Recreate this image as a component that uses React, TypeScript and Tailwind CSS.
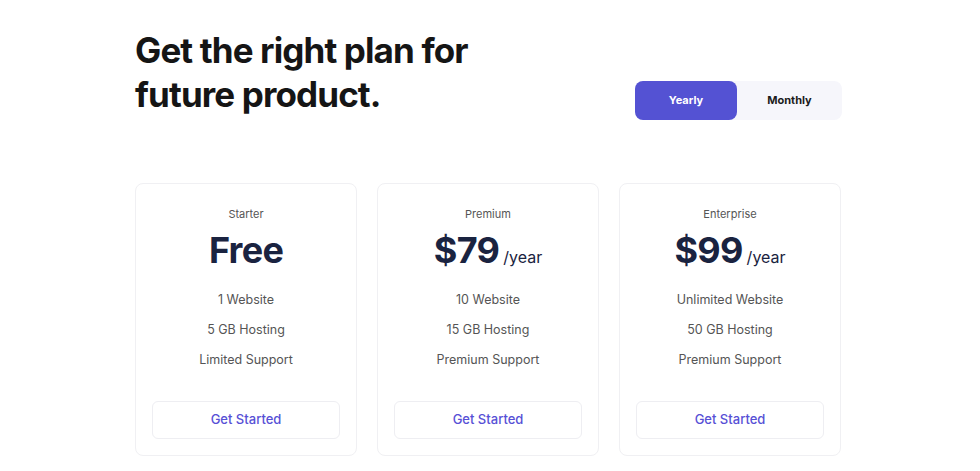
const plans = [
  { name: "Starter", price: "Free", suffix: "", features: ["1 Website", "5 GB Hosting", "Limited Support"] },
  { name: "Premium", price: "$79", suffix: "/year", features: ["10 Website", "15 GB Hosting", "Premium Support"] },
  { name: "Enterprise", price: "$99", suffix: "/year", features: ["Unlimited Website", "50 GB Hosting", "Premium Support"] },
];

export default function App() {
  return (
    <div className="min-h-screen bg-white font-['Inter',sans-serif]">
      <div className="ml-[135px] w-[706px] pt-[28px]">
        <div className="flex items-start justify-between">
          <h1 className="text-[35px] font-bold leading-[44px] tracking-[-0.025em] text-[#151515]">
            Get the right plan for
            <br />
            future product.
          </h1>
          <div className="mr-[-1px] mt-[53px] flex h-[39px] w-[207px] rounded-lg bg-[#f6f6fb]">
            <button className="w-[102px] rounded-lg bg-[#5452d3] text-[11px] font-bold text-white">Yearly</button>
            <button className="flex-1 text-[11px] font-bold text-[#1b1b1b]">Monthly</button>
          </div>
        </div>

        <div className="mt-[63px] grid grid-cols-3 gap-5">
          {plans.map((p) => (
            <div key={p.name} className="flex flex-col items-center rounded-lg border border-[#f0f0f3] px-4 pb-4 pt-[22px]">
              <div className="text-[11px] leading-4 text-[#555]">{p.name}</div>
              <div className="mt-[6px] flex items-baseline text-[#1a2340]">
                <span className="text-[36px] font-bold leading-[44px] tracking-[-0.02em]">{p.price}</span>
                {p.suffix && <span className="ml-1 text-[16px] leading-none">{p.suffix}</span>}
              </div>
              <div className="mt-[20px] flex flex-col items-center gap-[14px]">
                {p.features.map((f) => (
                  <div key={f} className="text-[12.5px] leading-4 text-[#555]">{f}</div>
                ))}
              </div>
              <button className="mt-[33px] h-[38px] w-full rounded-md border border-[#eeeef2] text-[13px] font-medium text-[#5750d6]">
                Get Started
              </button>
            </div>
          ))}
        </div>
      </div>
    </div>
  );
}
